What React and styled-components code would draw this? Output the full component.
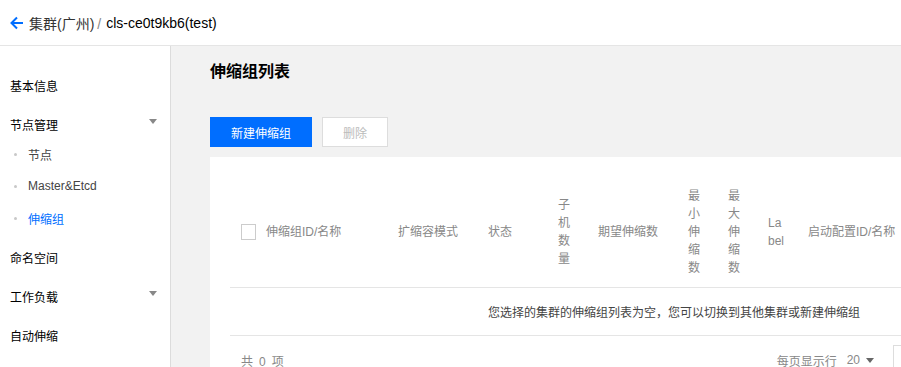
import React from "react";
import styled, { createGlobalStyle } from "styled-components";

const Global = createGlobalStyle`
  html, body { margin: 0; padding: 0; background: #fff; overflow: hidden; }
  body { font-family: "Liberation Sans", Arial, "Noto Sans CJK SC", sans-serif; font-size: 12px; color: #000; }
  * { box-sizing: border-box; }
`;

const Page = styled.div`
  width: 901px;
  height: 367px;
  display: flex;
  flex-direction: column;
  overflow: hidden;
`;

const Header = styled.header`
  height: 46px;
  flex: none;
  display: flex;
  align-items: center;
  padding-left: 10px;
  background: #fff;
  border-bottom: 1px solid #e5e5e5;
  font-size: 14px;
`;

const Back = styled.span`
  display: inline-flex;
  margin-right: 5px;
  color: #006eff;
`;

const Crumb = styled.span`
  color: ${(p) => (p.$current ? "#000" : "#333")};
  margin-right: ${(p) => (p.$current ? 0 : "5px")};
`;

const Slash = styled.span`
  color: #888;
  margin-left: 3px;
`;

const Body = styled.div`
  flex: 1;
  display: flex;
  min-height: 0;
`;

const Sidebar = styled.nav`
  width: 171px;
  flex: none;
  background: #fff;
  border-right: 1px solid #dcdcdc;
  padding-top: 20px;
`;

const Item = styled.div`
  height: 39px;
  display: flex;
  align-items: center;
  justify-content: space-between;
  padding: 0 13px 0 10px;
  font-size: 12px;
  color: #000;
`;

const Caret = styled.span`
  width: 0;
  height: 0;
  border-left: 4px solid transparent;
  border-right: 4px solid transparent;
  border-top: 5px solid #888;
  margin-top: -6px;
`;

const SubList = styled.div`
  margin-top: -6px;
  padding-bottom: 4px;
`;

const SubItem = styled.div`
  height: 32px;
  display: flex;
  align-items: center;
  padding-left: 14px;
  font-size: 12px;
  color: ${(p) => (p.$active ? "#006eff" : "#444")};
  &::before {
    content: "";
    width: 3px;
    height: 3px;
    border-radius: 50%;
    background: #c8c8c8;
    margin-right: 11px;
  }
`;

const Main = styled.main`
  flex: 1;
  background: #f2f2f2;
  padding: 14px 0 0 39px;
  overflow: hidden;
  min-width: 0;
`;

const Title = styled.h2`
  margin: 0;
  font-size: 16px;
  line-height: 24px;
  font-weight: bold;
  color: #000;
`;

const Toolbar = styled.div`
  display: flex;
  gap: 10px;
  margin-top: 33px;
`;

const Button = styled.button`
  height: 30px;
  padding: 0 20px;
  font-family: inherit;
  font-size: 12px;
  border: 1px solid ${(p) => (p.$primary ? "#006eff" : "#ddd")};
  background: ${(p) => (p.$primary ? "#006eff" : "#fff")};
  color: ${(p) => (p.$primary ? "#fff" : "#bbb")};
  cursor: pointer;
`;

const Card = styled.section`
  margin-top: 10px;
  background: #fff;
  padding: 20px;
  width: 928px;
`;

const Table = styled.div`
  width: 888px;
`;

const HeadRow = styled.div`
  display: grid;
  grid-template-columns: 26px 132px 90px 70px 40px 90px 40px 40px 40px 1fr;
  padding: 10px 0;
  border-bottom: 1px solid #e5e5e5;
`;

const HeadCell = styled.div`
  display: flex;
  align-items: center;
  padding: ${(p) => (p.$check ? "0 0 0 11px" : "0 10px")};
  font-size: 12px;
  line-height: 18px;
  color: #888;
  word-break: break-all;
`;

const Checkbox = styled.span`
  width: 16px;
  height: 16px;
  border: 1px solid #ccc;
  background: #fff;
`;

const EmptyRow = styled.div`
  height: 48px;
  display: flex;
  align-items: center;
  justify-content: center;
  border-bottom: 1px solid #e5e5e5;
  color: #444;
  font-size: 12px;
`;

const Footer = styled.div`
  display: flex;
  align-items: center;
  justify-content: space-between;
  padding: 9px 0 0 11px;
  font-size: 12px;
  color: #888;
`;

const Count = styled.span`
  margin: 0 6px;
`;

const RightGroup = styled.div`
  display: flex;
  align-items: center;
`;

const Select = styled.span`
  display: inline-flex;
  align-items: center;
  gap: 6px;
  margin-left: 10px;
  color: #888;
  &::after {
    content: "";
    border-left: 4px solid transparent;
    border-right: 4px solid transparent;
    border-top: 5px solid #666;
  }
`;

const Pager = styled.div`
  width: 225px;
  height: 30px;
  margin-left: 19px;
  border: 1px solid #ddd;
  background: #fff;
`;

const columns = [
  "伸缩组ID/名称",
  "扩缩容模式",
  "状态",
  "子机数量",
  "期望伸缩数",
  "最小伸缩数",
  "最大伸缩数",
  "Label",
  "启动配置ID/名称",
];

export default function App() {
  return (
    <Page>
      <Global />
      <Header>
        <Back>
          <svg width="14" height="14" viewBox="0 0 14 14" fill="none" stroke="currentColor" strokeWidth="2">
            <path d="M13 7H2M7 1.5L1.5 7L7 12.5" />
          </svg>
        </Back>
        <Crumb>
          集群(广州)<Slash>/</Slash>
        </Crumb>
        <Crumb $current>cls-ce0t9kb6(test)</Crumb>
      </Header>
      <Body>
        <Sidebar>
          <Item>基本信息</Item>
          <Item>
            节点管理<Caret />
          </Item>
          <SubList>
            <SubItem>节点</SubItem>
            <SubItem>Master&amp;Etcd</SubItem>
            <SubItem $active>伸缩组</SubItem>
          </SubList>
          <Item>命名空间</Item>
          <Item>
            工作负载<Caret />
          </Item>
          <Item>自动伸缩</Item>
        </Sidebar>
        <Main>
          <Title>伸缩组列表</Title>
          <Toolbar>
            <Button $primary>新建伸缩组</Button>
            <Button>删除</Button>
          </Toolbar>
          <Card>
            <Table>
              <HeadRow>
                <HeadCell $check>
                  <Checkbox />
                </HeadCell>
                {columns.map((c) => (
                  <HeadCell key={c}>{c}</HeadCell>
                ))}
              </HeadRow>
              <EmptyRow>您选择的集群的伸缩组列表为空，您可以切换到其他集群或新建伸缩组</EmptyRow>
              <Footer>
                <span>
                  共<Count>0</Count>项
                </span>
                <RightGroup>
                  <span>每页显示行</span>
                  <Select>20</Select>
                  <Pager />
                </RightGroup>
              </Footer>
            </Table>
          </Card>
        </Main>
      </Body>
    </Page>
  );
}
